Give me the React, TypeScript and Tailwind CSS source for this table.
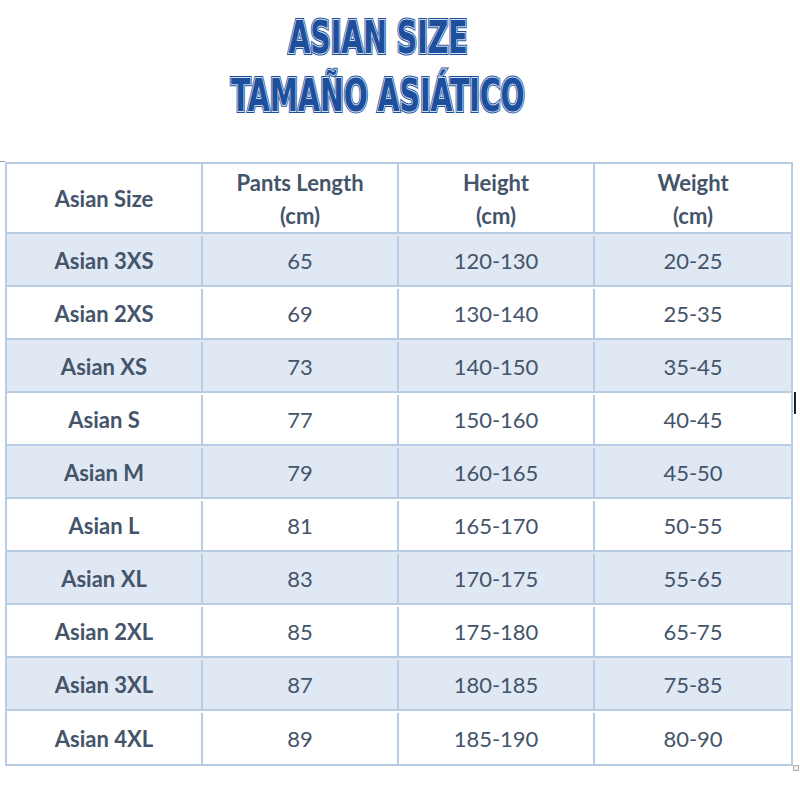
import React from "react";

const rows: [string, string, string, string][] = [
  ["Asian 3XS", "65", "120-130", "20-25"],
  ["Asian 2XS", "69", "130-140", "25-35"],
  ["Asian XS", "73", "140-150", "35-45"],
  ["Asian S", "77", "150-160", "40-45"],
  ["Asian M", "79", "160-165", "45-50"],
  ["Asian L", "81", "165-170", "50-55"],
  ["Asian XL", "83", "170-175", "55-65"],
  ["Asian 2XL", "85", "175-180", "65-75"],
  ["Asian 3XL", "87", "180-185", "75-85"],
  ["Asian 4XL", "89", "185-190", "80-90"],
];

function Title({ text }: { text: string }) {
  const base =
    "col-start-1 row-start-1 whitespace-nowrap font-['DejaVu_Sans_Condensed',sans-serif] font-bold text-[45px] leading-[44px] antialiased";
  return (
    <div className="grid scale-x-[0.70]">
      <span className={`${base} text-[#1e4f9c] [-webkit-text-stroke:4px_#1e4f9c]`}>{text}</span>
      <span className={`${base} text-[#1e4f9c] [-webkit-text-stroke:2px_#d3e0f2]`}>{text}</span>
      <span className={`${base} text-[#1e4f9c]`}>{text}</span>
    </div>
  );
}

export default function App() {
  const cell =
    "flex items-center justify-center border-r-2 border-[#b8cce4] last:border-r-0 text-center";
  return (
    <div className="relative w-[800px] h-[800px] bg-white overflow-hidden font-['Lato',sans-serif] text-[#44546a]">
      <div className="flex flex-col items-center pt-[16px] pr-[44px] gap-[14px]">
        <Title text="ASIAN SIZE" />
        <Title text="TAMAÑO ASIÁTICO" />
      </div>
      <div className="absolute left-0 top-[161px] w-[5px] h-px bg-[#9a9a9a]" />
      <div className="absolute left-[794px] top-[392px] w-[2px] h-[22px] bg-[#222]" />
      <div className="absolute left-[793px] top-[765px] w-[6px] h-[6px] border border-[#b0b0b0] bg-[#eee]" />
      <div className="ml-[5px] mt-[44px] w-[788px] border-2 border-[#b8cce4]">
        <div className="grid grid-cols-4 h-[70px] border-b-2 border-[#b8cce4] font-bold text-[22px] leading-[33px]">
          <div className={cell}>Asian Size</div>
          <div className={cell}>
            <span className="pt-[2px]">Pants Length<br />(cm)</span>
          </div>
          <div className={cell}>
            <span className="pt-[2px]">Height<br />(cm)</span>
          </div>
          <div className={cell}>
            <span className="pt-[2px]">Weight<br />(cm)</span>
          </div>
        </div>
        {rows.map((r, i) => (
          <div
            key={r[0]}
            className={`grid grid-cols-4 h-[53px] text-[22px] pt-[2px] ${i % 2 === 0 ? "bg-[#dfe8f3]" : "bg-white"} ${i < rows.length - 1 ? "border-b-2 border-[#b8cce4]" : ""}`}
          >
            <div className={`${cell} font-bold`}>{r[0]}</div>
            <div className={cell}>{r[1]}</div>
            <div className={cell}>{r[2]}</div>
            <div className={cell}>{r[3]}</div>
          </div>
        ))}
      </div>
    </div>
  );
}
